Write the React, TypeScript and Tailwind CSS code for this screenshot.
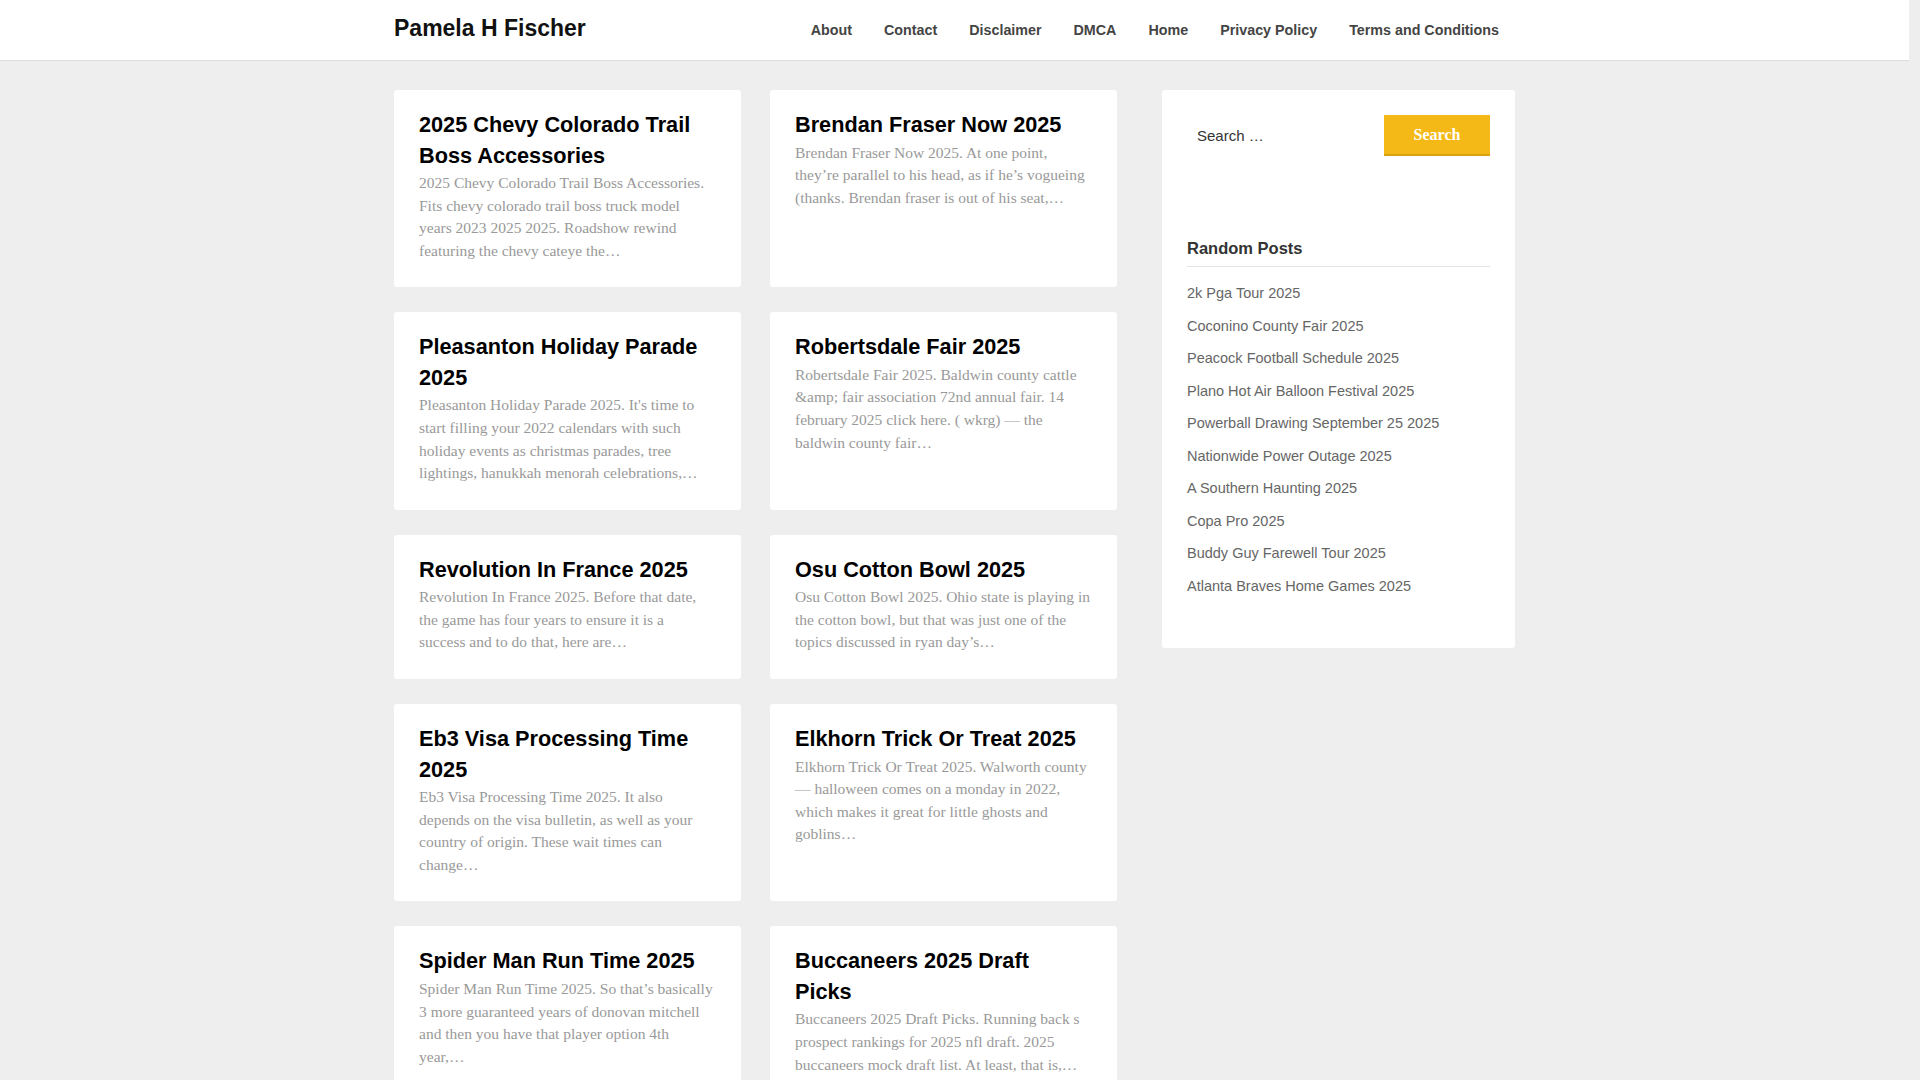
const navItems = ["About", "Contact", "Disclaimer", "DMCA", "Home", "Privacy Policy", "Terms and Conditions"];

const posts = [
  {
    title: "2025 Chevy Colorado Trail Boss Accessories",
    excerpt:
      "2025 Chevy Colorado Trail Boss Accessories. Fits chevy colorado trail boss truck model years 2023 2025 2025. Roadshow rewind featuring the chevy cateye the…",
  },
  {
    title: "Brendan Fraser Now 2025",
    excerpt:
      "Brendan Fraser Now 2025. At one point, they’re parallel to his head, as if he’s vogueing (thanks. Brendan fraser is out of his seat,…",
  },
  {
    title: "Pleasanton Holiday Parade 2025",
    excerpt:
      "Pleasanton Holiday Parade 2025. It's time to start filling your 2022 calendars with such holiday events as christmas parades, tree lightings, hanukkah menorah celebrations,…",
  },
  {
    title: "Robertsdale Fair 2025",
    excerpt:
      "Robertsdale Fair 2025. Baldwin county cattle &amp; fair association 72nd annual fair. 14 february 2025 click here. ( wkrg) — the baldwin county fair…",
  },
  {
    title: "Revolution In France 2025",
    excerpt:
      "Revolution In France 2025. Before that date, the game has four years to ensure it is a success and to do that, here are…",
  },
  {
    title: "Osu Cotton Bowl 2025",
    excerpt:
      "Osu Cotton Bowl 2025. Ohio state is playing in the cotton bowl, but that was just one of the topics discussed in ryan day’s…",
  },
  {
    title: "Eb3 Visa Processing Time 2025",
    excerpt:
      "Eb3 Visa Processing Time 2025. It also depends on the visa bulletin, as well as your country of origin. These wait times can change…",
  },
  {
    title: "Elkhorn Trick Or Treat 2025",
    excerpt:
      "Elkhorn Trick Or Treat 2025. Walworth county — halloween comes on a monday in 2022, which makes it great for little ghosts and goblins…",
  },
  {
    title: "Spider Man Run Time 2025",
    excerpt:
      "Spider Man Run Time 2025. So that’s basically 3 more guaranteed years of donovan mitchell and then you have that player option 4th year,…",
  },
  {
    title: "Buccaneers 2025 Draft Picks",
    excerpt:
      "Buccaneers 2025 Draft Picks. Running back s prospect rankings for 2025 nfl draft. 2025 buccaneers mock draft list. At least, that is,…",
  },
];

const randomPosts = [
  "2k Pga Tour 2025",
  "Coconino County Fair 2025",
  "Peacock Football Schedule 2025",
  "Plano Hot Air Balloon Festival 2025",
  "Powerball Drawing September 25 2025",
  "Nationwide Power Outage 2025",
  "A Southern Haunting 2025",
  "Copa Pro 2025",
  "Buddy Guy Farewell Tour 2025",
  "Atlanta Braves Home Games 2025",
];

export default function App() {
  return (
    <div className="min-h-screen pr-[11px] bg-[#eeeeee] font-['Liberation_Sans',Arial,sans-serif]">
      <header className="bg-white border-b border-[#dddddd] h-[61px]">
        <div className="w-[1121px] mx-auto h-[60px] flex items-center justify-between">
          <a href="#" className="text-[23px] font-bold text-[#111111] leading-none -mt-[3px]">
            Pamela H Fischer
          </a>
          <nav className="flex mt-[2px]">
            {navItems.map((item) => (
              <a key={item} href="#" className="px-4 text-[14.3px] font-bold text-[#444444]">
                {item}
              </a>
            ))}
          </nav>
        </div>
      </header>

      <div className="w-[1121px] mx-auto flex items-start gap-[45px] pt-[29px] pb-10">
        <main className="w-[723px] grid grid-cols-2 gap-x-[29px] gap-y-[25px]">
          {posts.map((post) => (
            <article
              key={post.title}
              className="bg-white rounded-[3px] pl-[25px] pr-[26.9px] pt-5 pb-[25px]"
            >
              <h2 className="text-[21.7px] font-bold leading-[30.5px] text-black">
                <a href="#">{post.title}</a>
              </h2>
              <p className="mt-[1px] font-['Liberation_Serif','Times_New_Roman',serif] text-[15.5px] leading-[22.6px] text-[#999999]">
                {post.excerpt}
              </p>
            </article>
          ))}
        </main>

        <aside className="w-[353px] bg-white rounded-[3px] px-[25px] pt-[25px] pb-[46px]">
          <form className="flex" onSubmit={(e) => e.preventDefault()}>
            <input
              type="search"
              placeholder="Search …"
              className="flex-1 min-w-0 h-[41px] pl-[10px] text-[15px] text-[#333333] placeholder:text-[#333333] outline-none"
            />
            <button
              type="submit"
              className="w-[106px] h-[41px] bg-[#f5b917] border-b-2 border-[#d9a20f] text-white font-bold font-['Liberation_Serif','Times_New_Roman',serif] text-[16px]"
            >
              Search
            </button>
          </form>

          <h3 className="mt-[80px] pb-[6px] border-b border-[#e5e5e5] text-[16.5px] leading-[24px] font-bold text-[#333333]">
            Random Posts
          </h3>
          <ul className="mt-[10px]">
            {randomPosts.map((item) => (
              <li key={item} className="py-[5px] text-[14.5px] leading-[22.5px] text-[#666666]">
                <a href="#">{item}</a>
              </li>
            ))}
          </ul>
        </aside>
      </div>
    </div>
  );
}
